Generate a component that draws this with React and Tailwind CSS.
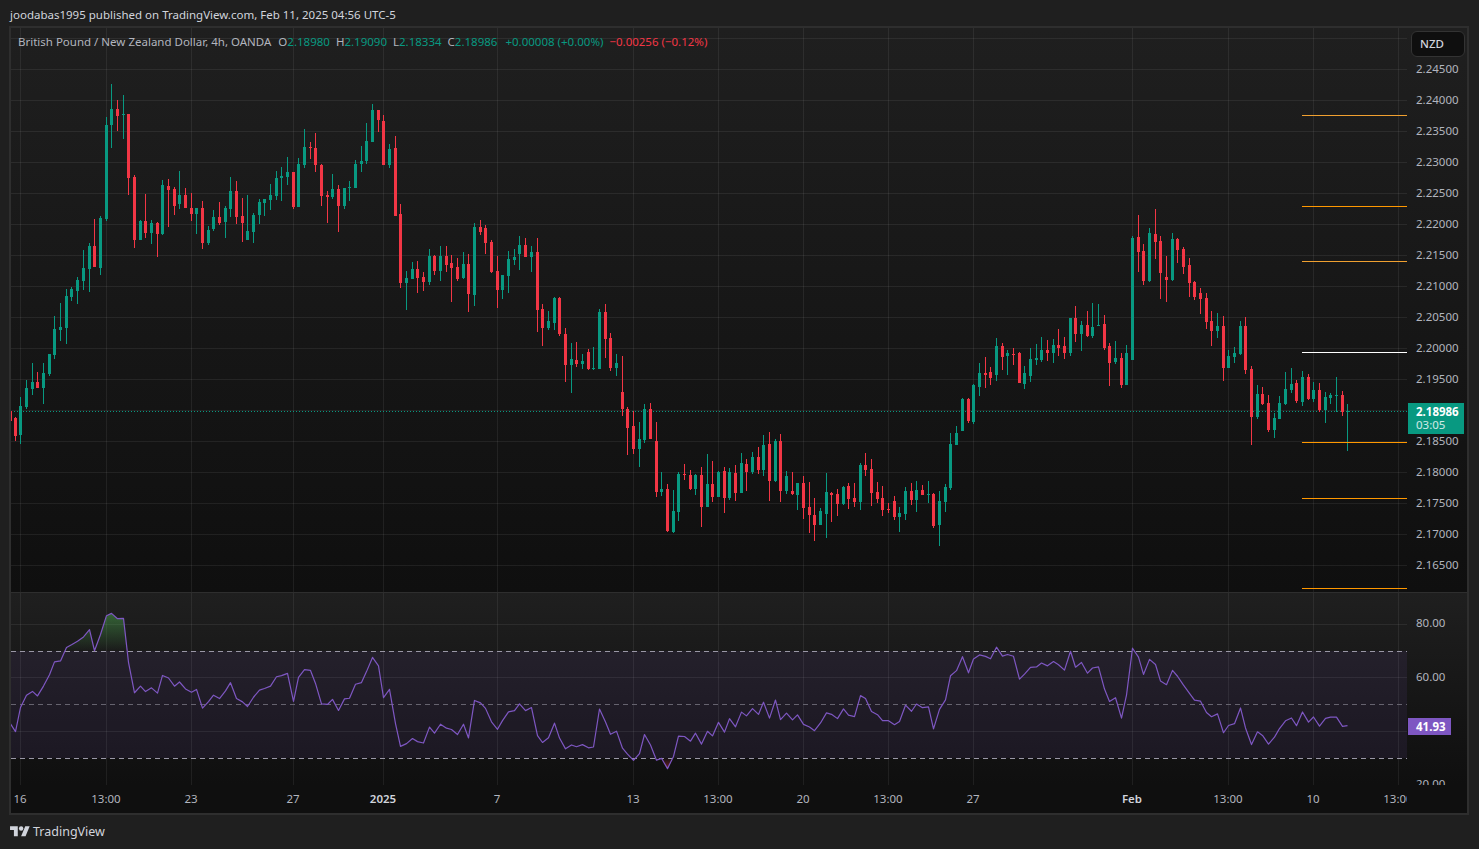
const green = "#089981";
const red = "#f23645";

// candles read off the chart: [x, wickTop, wickBottom, bodyTop, bodyBottom, up]
const seg = (ox, oy, rows) =>
  rows.map(([zx, wt, wb, bt, bb, up]) => ({
    x: ox + Math.floor(zx / 3),
    wt: oy + wt / 3,
    wb: oy + wb / 3,
    bt: oy + bt / 3,
    bb: oy + bb / 3,
    up,
  }));

const candles = [
  ...seg(10, 80, [
    [16,1012,1082,1014,1067,0],[31,951,1091,978,1064,1],[49,900,986,924,981,1],[67,849,945,906,927,1],[82,876,924,906,923,0],
    [100,849,971,879,923,1],[118,822,887,822,882,1],[133,708,837,747,825,1],[151,669,783,741,750,1],[169,627,792,648,744,1],
    [184,621,663,627,651,1],[202,591,672,600,633,1],[220,510,630,564,603,1],[238,489,636,498,567,1],[253,417,561,498,561,0],
    [271,408,585,414,564,1],[289,111,423,135,417,1],[304,12,204,87,135,1],[322,60,153,87,108,0],[340,45,177,102,105,1],
    [355,102,345,102,294,0],[373,285,504,291,480,0],[391,420,480,423,480,1],[406,342,474,423,459,0],[424,420,492,429,459,1],
    [442,426,531,429,462,0],[457,300,465,315,462,1],[475,297,441,318,330,0],[493,321,405,327,378,0],[508,273,387,345,372,1],
    [526,324,384,345,384,0],[544,339,423,384,402,0],[559,384,462,384,402,1],[577,363,507,384,489,0],[595,438,495,450,489,1],
    [610,390,453,411,447,1],[628,366,435,411,429,0],[646,378,474,384,426,1],[661,291,411,333,387,1],[679,303,432,333,411,0],
    [697,354,486,408,429,0],[712,345,480,453,480,1],[730,399,489,405,456,1],[748,357,432,366,405,1],[763,357,408,357,369,1],
    [781,312,390,345,360,1],[799,273,360,294,348,1],[814,261,363,288,294,1],[832,231,315,276,291,1],[850,276,387,276,381,0],
    [865,234,381,252,381,1],[883,147,264,201,255,1],[901,186,237,201,204,0],[916,159,276,204,255,0],[934,252,378,255,348,0],
    [952,333,429,345,351,0],[967,282,357,327,351,1],[985,315,456,327,378,0],[1003,324,387,324,378,1],
  ]),
  ...seg(340, 100, [
    [28,243,303,261,264,1],[46,180,264,192,264,1],[64,138,216,183,192,1],[79,69,192,123,183,1],[97,12,126,30,126,1],
    [115,30,96,30,60,0],[130,45,195,63,195,0],[148,132,204,147,195,1],[166,108,348,144,348,0],[181,312,564,342,549,0],
    [199,513,630,534,549,1],[217,486,537,507,537,1],[232,483,579,507,534,0],[250,516,573,531,546,0],[268,447,555,468,546,1],
    [283,465,525,468,513,0],[301,438,543,468,513,1],[319,438,516,468,495,0],[334,465,606,489,504,0],[352,474,543,501,537,0],
    [370,456,537,492,534,1],[385,462,636,492,582,0],[403,369,618,381,585,1],[421,360,405,381,396,0],[436,375,462,384,429,0],
    [454,420,519,426,516,0],[472,468,624,513,570,0],[487,525,597,525,570,1],[505,453,579,477,528,1],[523,447,495,471,480,1],
    [538,408,510,435,462,1],[556,414,471,435,471,0],[574,438,516,456,471,1],[592,414,696,456,630,0],[607,612,738,627,684,0],
    [625,633,690,663,684,1],[643,591,690,594,669,1],[658,591,708,594,702,0],[676,684,846,702,795,0],[694,729,879,777,795,1],
    [709,726,801,780,792,0],[727,762,807,783,792,1],[745,747,810,756,807,0],[760,741,810,804,807,1],[778,627,807,636,807,1],
    [796,612,774,636,717,0],[811,699,813,714,804,0],[829,762,828,789,804,1],[847,768,948,876,927,0],[862,921,1065,927,984,0],
    [880,933,1062,978,1047,0],[898,966,1101,1017,1047,1],[913,912,1029,927,1020,1],[931,909,1017,927,1017,0],[949,966,1191,1023,1176,0],
    [964,1116,1188,1167,1176,1],[982,1152,1296,1167,1293,0],[1000,1170,1299,1233,1296,1],[1015,1116,1263,1122,1236,1],
  ]),
  ...seg(670, 300, [
    [43,492,540,522,525,0],[61,510,570,525,567,0],[76,522,585,525,567,1],[94,501,681,525,621,0],[112,462,621,552,621,1],
    [127,483,606,552,591,0],[145,513,591,516,591,1],[163,501,639,513,594,0],[178,504,600,516,594,1],[196,495,603,519,579,0],
    [214,459,579,489,579,1],[229,477,573,492,516,0],[247,456,522,471,516,1],[265,441,522,471,510,0],[280,405,528,435,510,1],
    [298,396,603,432,543,0],[316,417,546,423,543,1],[331,402,606,423,573,0],[349,513,582,528,573,1],[367,516,585,573,582,0],
    [382,549,630,549,585,1],[400,528,657,549,624,0],[418,546,699,621,645,0],[433,594,723,645,675,0],[451,624,675,633,675,1],
    [469,519,714,576,642,1],[484,576,666,579,585,0],[502,567,648,582,612,0],[520,558,615,561,612,1],[535,549,627,558,597,0],
    [553,549,621,594,606,0],[571,489,630,495,606,1],[586,459,528,495,510,0],[604,477,618,507,579,0],[622,546,609,576,597,0],
    [637,558,648,594,630,0],[655,609,639,627,630,0],[673,588,660,603,651,0],[688,621,696,639,651,1],[706,561,660,573,642,1],
    [724,549,615,573,600,0],[739,543,636,570,600,1],[757,555,585,570,585,0],[775,543,609,582,585,1],[790,579,684,582,678,0],
    [808,573,738,603,675,1],[826,552,636,561,606,1],[841,399,570,432,564,1],[859,378,435,399,435,1],[877,294,393,297,393,1],
    [895,294,369,297,363,0],[910,252,372,255,366,1],[928,189,288,219,261,1],[946,171,264,219,225,0],[961,201,255,216,234,0],
    [979,114,243,138,225,1],[997,129,210,138,171,0],[1012,150,225,159,168,1],
  ]),
  ...seg(940, 200, [
    [220,444,495,462,465,0],[238,456,549,459,549,0],[253,498,567,519,552,1],[271,444,546,477,528,1],[289,432,495,474,480,1],
    [304,411,486,450,480,1],[322,420,483,450,459,0],[340,417,489,435,459,1],[355,387,468,435,444,0],[373,411,477,438,459,0],
    [391,354,468,354,459,1],[406,318,426,354,402,0],[424,363,453,375,402,1],[442,333,411,375,408,0],[457,309,414,381,408,1],
    [475,312,378,375,378,1],[493,345,450,372,444,0],[508,429,558,438,489,0],[526,423,492,474,486,1],[544,459,564,474,555,0],
    [559,435,555,459,555,1],[577,108,480,114,480,1],
  ]),
  ...seg(1100, 200, [
    [115,45,216,111,156,0],[130,132,255,153,243,0],[148,84,246,99,243,1],[166,27,177,102,126,0],[181,108,297,123,219,0],
    [199,168,306,231,240,0],[217,99,243,117,240,1],[232,114,189,117,150,0],[250,141,222,147,201,0],[268,174,291,195,249,0],
    [283,243,300,246,291,0],[301,264,342,279,297,0],[319,279,387,294,366,0],[334,333,438,363,393,0],[352,339,414,378,393,1],
    [370,348,543,378,504,0],[385,450,504,468,504,1],[403,441,489,459,471,1],[421,363,465,378,462,1],[436,351,522,378,510,0],
    [454,498,735,507,651,0],[472,555,657,582,651,1],[487,561,615,582,612,0],[505,585,696,609,690,0],[523,639,714,654,690,1],
    [538,588,657,609,657,1],[556,516,615,567,612,1],[574,504,579,552,570,1],[589,540,609,549,603,0],[607,513,618,531,606,1],
    [625,522,600,531,597,0],[640,546,606,570,597,1],[658,549,636,570,630,0],[676,576,669,591,630,1],[691,579,612,585,594,1],
    [709,531,636,585,588,1],[727,573,648,585,636,0],[742,612,753,633,636,1],
  ]),
];

// rsi from the closes (pixel deltas are enough, the ratio is all that matters)
function rsiPoints() {
  let gain = 5.2;
  let loss = 7.8;
  const pts = [[10, 723]];
  let prev = null;
  for (const c of candles) {
    const close = c.up ? c.bt : c.bb;
    if (prev !== null) {
      const d = prev - close;
      gain = (gain * 13 + Math.max(d, 0)) / 14;
      loss = (loss * 13 + Math.max(-d, 0)) / 14;
    }
    prev = close;
    const v = 100 - 100 / (1 + gain / loss);
    pts.push([c.x + 0.5, 624 + (80 - v) * 2.69]);
  }
  return pts;
}

const vLines = [20, 106, 191, 293, 383, 497, 633, 718, 803, 888, 973, 1132, 1228, 1313, 1398];
const hLines = Array.from({ length: 18 }, (_, i) => 38 + i * 31);
const prices = ["2.24500", "2.24000", "2.23500", "2.23000", "2.22500", "2.22000", "2.21500", "2.21000", "2.20500", "2.20000", "2.19500", "", "2.18500", "2.18000", "2.17500", "2.17000", "2.16500"];
const levels = [
  { y: 115, c: "#f0a030" },
  { y: 206, c: "#ff9800" },
  { y: 261, c: "#f0a030" },
  { y: 352, c: "#ffffff" },
  { y: 442, c: "#ff9800" },
  { y: 498, c: "#ff9800" },
  { y: 588, c: "#ff9800" },
];
const ticks = [
  ["16", 20], ["13:00", 106], ["23", 191], ["27", 293], ["2025", 383, true], ["7", 497], ["13", 633], ["13:00", 718],
  ["20", 803], ["13:00", 888], ["27", 973], ["Feb", 1132, true], ["13:00", 1228], ["10", 1313], ["13:00", 1398],
];

function Grid({ ys }) {
  return (
    <g stroke="#ffffff" strokeOpacity="0.07" shapeRendering="crispEdges">
      {vLines.map((x) => (
        <line key={x} x1={x + 0.5} x2={x + 0.5} y1="0" y2="849" />
      ))}
      {ys.map((y) => (
        <line key={y} x1="0" x2="1407" y1={y + 0.5} y2={y + 0.5} />
      ))}
    </g>
  );
}

function MainChart() {
  return (
    <svg viewBox="11 28 1396 564" className="block w-[1396px] h-[564px] shrink-0">
      <Grid ys={hLines} />
      <line x1="11" x2="1407" y1="411.5" y2="411.5" stroke={green} strokeDasharray="1 2" />
      <g shapeRendering="crispEdges">
        <rect x="11" y="411" width="1" height="10" fill={red} />
        {candles.map((c) => (
          <g key={c.x} fill={c.up ? green : red}>
            <rect x={c.x} y={c.wt} width="1" height={c.wb - c.wt} />
            <rect x={c.x - 1} y={c.bt} width="3" height={Math.max(c.bb - c.bt, 1)} />
          </g>
        ))}
        {levels.map((l) => (
          <rect key={l.y} x="1302" y={l.y} width="105" height="1" fill={l.c} />
        ))}
      </g>
    </svg>
  );
}

function RsiChart() {
  const pts = rsiPoints();
  const line = pts.map((p) => p.join(",")).join(" ");
  const first = pts[0][0];
  const last = pts[pts.length - 1][0];
  return (
    <svg viewBox="11 593 1396 192" className="block w-[1396px] h-[192px] shrink-0">
      <defs>
        <linearGradient id="over" gradientUnits="userSpaceOnUse" x1="0" x2="0" y1="612" y2="651">
          <stop offset="0" stopColor="#4caf50" stopOpacity="0.5" />
          <stop offset="1" stopColor="#4caf50" stopOpacity="0" />
        </linearGradient>
        <linearGradient id="under" gradientUnits="userSpaceOnUse" x1="0" x2="0" y1="758" y2="770">
          <stop offset="0" stopColor="#f23645" stopOpacity="0" />
          <stop offset="1" stopColor="#f23645" stopOpacity="0.5" />
        </linearGradient>
        <clipPath id="aboveBand">
          <rect x="11" y="593" width="1396" height="58" />
        </clipPath>
        <clipPath id="belowBand">
          <rect x="11" y="758" width="1396" height="27" />
        </clipPath>
      </defs>
      <rect x="11" y="651" width="1396" height="107" fill="#7e57c2" fillOpacity="0.1" />
      <Grid ys={[624, 677, 731, 785]} />
      <polygon points={`${first},651 ${line} ${last},651`} fill="url(#over)" clipPath="url(#aboveBand)" />
      <polygon points={`${first},758 ${line} ${last},758`} fill="url(#under)" clipPath="url(#belowBand)" />
      <g strokeDasharray="5 4" shapeRendering="crispEdges">
        <line x1="11" x2="1407" y1="651.5" y2="651.5" stroke="#9a97a6" />
        <line x1="11" x2="1407" y1="704.5" y2="704.5" stroke="#66636f" />
        <line x1="11" x2="1407" y1="758.5" y2="758.5" stroke="#9a97a6" />
      </g>
      <polyline points={line} fill="none" stroke="#7e57c2" strokeWidth="1.2" strokeLinejoin="round" />
    </svg>
  );
}

function Legend() {
  return (
    <div className="absolute left-[7px] top-[7px] flex items-center text-[11.5px] leading-[14px] text-[#b2b5be] whitespace-nowrap">
      <span className="mr-[7px]">British Pound / New Zealand Dollar, 4h, OANDA</span>
      {[["O", "2.18980"], ["H", "2.19090"], ["L", "2.18334"], ["C", "2.18986"]].map(([k, v]) => (
        <span key={k} className="mr-[6px]">
          {k}
          <span className="text-[#089981]">{v}</span>
        </span>
      ))}
      <span className="text-[#089981] ml-[2px] mr-[6px]">+0.00008 (+0.00%)</span>
      <span className="text-[#f23645]">−0.00256 (−0.12%)</span>
    </div>
  );
}

function TimeAxis() {
  return (
    <div className="h-[28px] bg-[#0f0f0f]">
      <div className="w-[1396px] flex overflow-hidden text-[11.5px] leading-[28px] text-[#b2b5be]">
        {ticks.map(([label, x, strong], i) => (
          <div
            key={i}
            className="shrink-0 flex justify-end"
            style={{ width: x - (i === 0 ? 11 : ticks[i - 1][1]) }}
          >
            <div className={strong ? "w-0 flex justify-center font-semibold text-[#d1d4dc]" : "w-0 flex justify-center"}>
              {label}
            </div>
          </div>
        ))}
      </div>
    </div>
  );
}

export default function App() {
  return (
    <div className="w-[1479px] h-[849px] overflow-hidden bg-[#1f1f1f] text-[#d1d4dc] font-['Noto_Sans','Open_Sans',sans-serif]">
      <div className="h-[26px] pl-[10px] text-[11.5px] leading-[30px] text-[#d1d4dc] whitespace-nowrap">
        joodabas1995 published on TradingView.com, Feb 11, 2025 04:56 UTC-5
      </div>
      <div className="ml-[9px] w-[1460px] border-2 border-[#2e2e2e]">
        <div className="h-[564px] flex relative overflow-hidden bg-gradient-to-b from-[#1f1f1f] to-[#0f0f0f]">
          <MainChart />
          <Legend />
          <div className="w-[60px] pt-[24.5px] pl-[9px] text-[11.5px] text-[#b2b5be]">
            {prices.map((p, i) => (
              <div key={i} className="h-[31px] leading-[31px]">{p}</div>
            ))}
          </div>
          <div className="absolute left-[1400px] top-[3px] w-[54px] h-[26px] pl-[8px] rounded-md border border-[#333] bg-[#0f0f0f] text-[11.5px] leading-[24px] font-medium text-[#d1d4dc]">
            NZD
          </div>
          <div className="absolute left-[1397px] top-[375px] w-[56px] h-[31px] pl-[8px] bg-[#089981] text-[11.5px] leading-[14px] pt-[2px] text-white">
            <div className="font-bold">2.18986</div>
            <div className="-mt-px text-white/80">03:05</div>
          </div>
        </div>
        <div className="h-px bg-[#2e2e2e]" />
        <div className="h-[192px] flex relative overflow-hidden bg-gradient-to-b from-[#1f1f1f] to-[#0f0f0f]">
          <RsiChart />
          <div className="w-[60px] pt-[3px] pl-[9px] text-[11.5px] text-[#b2b5be]">
            {["80.00", "60.00", "40.00", "20.00"].map((p) => (
              <div key={p} className="h-[53.67px] leading-[53.67px]">{p}</div>
            ))}
          </div>
          <div className="absolute left-[1397px] top-[125px] w-[43px] h-[17px] pl-[8px] bg-[#7e57c2] text-[11.5px] leading-[17px] font-bold text-white">
            41.93
          </div>
        </div>
        <TimeAxis />
      </div>
      <div className="h-[34px] pl-[10px] flex items-center gap-[3px] text-[12.5px] text-[#d1d4dc]">
        <svg viewBox="0 0 36 28" className="w-[20px] h-[15.5px]" fill="#d1d4dc">
          <path d="M14 22H7V11H0V4h14v18zM28 22h-8l7.5-18h8L28 22z" />
          <circle cx="20" cy="8" r="4" />
        </svg>
        <span>TradingView</span>
      </div>
    </div>
  );
}
